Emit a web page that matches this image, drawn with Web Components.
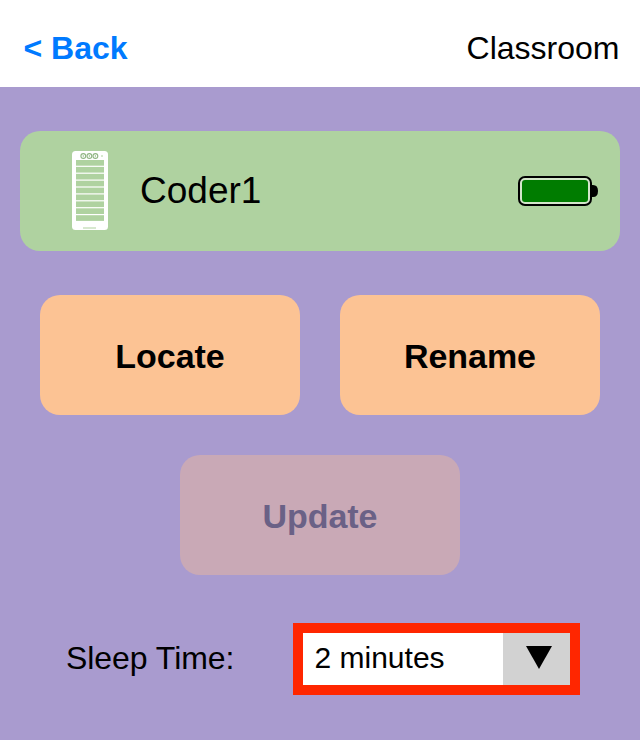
<!DOCTYPE html>
<html lang="en"><head><meta charset="utf-8"><title>Coder1</title>
<style>
html,body{margin:0;padding:0;height:100%}
body{font-family:"Liberation Sans",Arial,sans-serif;background:#a99bcf}
</style></head><body>
<app-screen>
  <nav-bar slot="nav" back="&lt; Back" title-text="Classroom"></nav-bar>
  <device-card name="Coder1"></device-card>
  <action-row>
    <action-button>Locate</action-button>
    <action-button>Rename</action-button>
  </action-row>
  <action-row class="single">
    <action-button disabled wide>Update</action-button>
  </action-row>
  <sleep-row label="Sleep Time:" value="2 minutes"></sleep-row>
</app-screen>
<script>
function def(name, html){
  customElements.define(name, class extends HTMLElement{
    connectedCallback(){
      if(this.shadowRoot) return;
      const r=this.attachShadow({mode:'open'});
      r.innerHTML=typeof html==='function'?html(this):html;
    }
  });
}
const bars=[0,1,2,3,4,5,6,7,8].map(i=>`<rect x="4" y="${(9+i*6.9).toFixed(1)}" width="28" height="5.7"/>`).join('');
def('app-screen',`<style>
:host{display:block;width:640px;height:740px;overflow:hidden;background:#a99bcf}
main{display:flex;flex-direction:column;padding:44px 20px 0}
</style><slot name="nav"></slot><main><slot></slot></main>`);
def('nav-bar',el=>`<style>
:host{display:flex;justify-content:space-between;align-items:center;box-sizing:border-box;height:87px;padding:8px 20.5px 0 23.5px;background:#fff;font:32px/40px "Liberation Sans",Arial,sans-serif;color:#000}
.b{font-weight:700;color:#007aff}
</style><span class="b">${el.getAttribute('back').replace('<','&lt;')}</span><span>${el.getAttribute('title-text')}</span>`);
def('device-card',el=>`<style>
:host{display:flex;align-items:center;height:120px;border-radius:20px;background:#afd2a0;font:37px/44px "Liberation Sans",Arial,sans-serif;color:#000;padding:0 22px 0 52px;box-sizing:border-box;margin-bottom:44px}
.n{flex:1;margin-left:32px}
svg{display:block}
.p{margin-bottom:1px}
</style>
<svg class="p" width="36" height="79" viewBox="0 0 36 79" aria-hidden="true">
<rect width="36" height="79" rx="3.5" fill="#fff"/>
<g fill="#fff" stroke="#8fb582" stroke-width="1.1"><circle cx="11.3" cy="5" r="2.4"/><circle cx="17.4" cy="5" r="2.4"/><circle cx="23.4" cy="5" r="2.4"/></g>
<g fill="#8fb582"><circle cx="11.3" cy="5" r=".7"/><circle cx="17.4" cy="5" r=".7"/><circle cx="23.4" cy="5" r=".7"/></g>
<rect x="29" y="4.500" width="2" height="1" fill="#afd2a0"/>
<g fill="#afd2a0">${bars}
<rect x="11" y="76.500" width="13" height="1"/></g>
</svg>
<span class="n">${el.getAttribute('name')}</span>
<svg width="80" height="30" viewBox="0 0 80 30" aria-hidden="true">
<path d="M72 9h3q5 0 5 6t-5 6h-3z" fill="#000"/>
<rect x="1" y="1" width="72" height="28" rx="6" fill="#d3e6ca" stroke="#000" stroke-width="2"/>
<rect x="4" y="4" width="66" height="22" rx="3" fill="#007c00"/>
</svg>`);
def('action-row',`<style>
:host{display:flex;justify-content:center;gap:40px;margin-bottom:40px}
</style><slot></slot>`);
def('action-button',el=>{
  const d=el.hasAttribute('disabled');
  return `<style>
:host{display:flex;align-items:center;justify-content:center;box-sizing:border-box;padding-top:2px;width:${el.hasAttribute('wide')?280:260}px;height:120px;border-radius:20px;background:${d?'#c9a9b6':'#fcc394'};color:${d?'#6a6186':'#000'};font:700 34px/40px "Liberation Sans",Arial,sans-serif;letter-spacing:-.05px}
</style><slot></slot>`;
});
def('sleep-row',el=>`<style>
:host{display:flex;align-items:center;height:72px;margin-top:8px;padding-left:46px;font:32px/40px "Liberation Sans",Arial,sans-serif;color:#000}
.l{width:227px;flex:none;font-size:32px;letter-spacing:-.05px;padding-bottom:2px}
.s{display:flex;box-sizing:border-box;width:287px;height:72px;border:10px solid #ff2600;background:#fff}
.v{flex:1;padding-left:11.5px;font-size:30px;line-height:50px}
.a{width:67px;box-sizing:border-box;padding:0 0 3px 5px;background:#d2d2d2;display:flex;align-items:center;justify-content:center}
svg{display:block}
</style><span class="l">${el.getAttribute('label')}</span>
<div class="s"><span class="v">${el.getAttribute('value')}</span><div class="a"><svg width="26" height="23" viewBox="0 0 26 23" aria-hidden="true"><path d="M0 0H26L13 23z" fill="#000"/></svg></div></div>`);
</script>
</body></html>
